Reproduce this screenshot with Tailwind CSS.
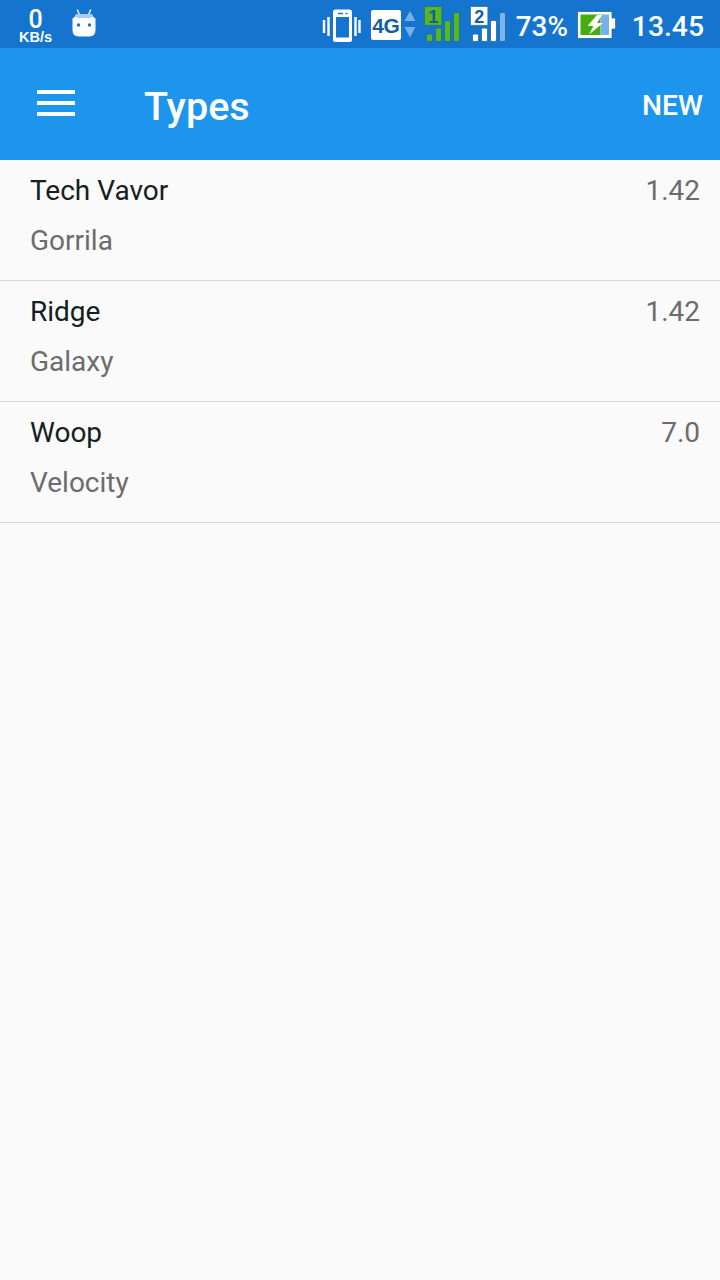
<!DOCTYPE html>
<html lang="en">
<head>
    <meta charset="UTF-8">
    <meta name="viewport" content="width=device-width, initial-scale=1.0">
    <title>Types</title>
    <script src="https://cdn.jsdelivr.net/npm/@tailwindcss/browser@4"></script>
</head>
<body class="bg-[#fafafa] min-h-screen font-['Roboto',sans-serif]">
    <!-- Status bar -->
    <div class="flex h-12 bg-[#1575ce] text-white overflow-hidden">
        <div class="w-[34px] ml-[18.5px] pt-[9px] flex flex-col items-center">
            <span class="text-[25px] leading-[21px] font-medium">0</span>
            <span class="text-[14.5px] leading-[14px] font-bold font-['Liberation_Sans',sans-serif]">KB/s</span>
        </div>
        <svg class="ml-[19.5px] mt-[8px] w-6 h-[30px]" viewBox="0 0 24 30" fill="none">
            <path d="M5.500 2l2 5M18.500 2l-2 5" stroke="#e8f4ff" stroke-width="1.500" stroke-linecap="round" />
            <path d="M4 6h16l2.500 4.500h-21z" fill="#a9cdf0" />
            <path d="M.5 10.500L3 9h18l2.500 1.500V22q0 6-6 6.500h-11q-6-.5-6-6.500z" fill="#fff" />
            <path d="M5 6h14v4H5z" fill="#a9cdf0" />
            <circle cx="6.500" cy="17" r="1.700" fill="#1575ce" />
            <circle cx="17.500" cy="17" r="1.700" fill="#1575ce" />
        </svg>

        <div class="ml-auto flex">
            <!-- Vibrate -->
            <svg class="w-[40px] h-12" viewBox="0 0 40 48">
                <path d="M3 20v13M7.500 17v19M34.500 17v19M38.500 20v13" stroke="#fff" stroke-width="2.400" />
                <rect x="12" y="9.500" width="19" height="32.500" rx="2.500" fill="#fff" />
                <rect x="15" y="17" width="13" height="20.500" fill="#1575ce" />
                <path d="M17 13.500h5M24.500 13.500h2" stroke="#1575ce" stroke-width="1.500" />
            </svg>
            <!-- Network type -->
            <div class="ml-[10px] mt-[10px] w-[30px] h-[30px] rounded-[2px] bg-white text-[#175f9c] flex items-center justify-center text-[21px] leading-none font-bold font-['Liberation_Sans',sans-serif] tracking-[-0.5px]">4G</div>
            <svg class="ml-[3px] w-3 h-12" viewBox="0 0 12 48" fill="#74b0ea">
                <path d="M6 11l5.500 10H.5z" />
                <path d="M6 37.500L.5 27h11z" />
            </svg>
            <!-- Signals -->
            <svg class="ml-[8px] w-[37px] h-12" viewBox="0 0 37 48">
                <g fill="#56b81c" stroke="#1a6aa0" stroke-width=".8">
                    <rect x=".4" y="6.400" width="17.500" height="19" rx="1" />
                    <rect x="2.500" y="34" width="6" height="7.500" rx="1.500" />
                    <rect x="11.500" y="28" width="6" height="13.500" rx="1.500" />
                    <rect x="20.500" y="20.500" width="6" height="21" rx="1.500" />
                    <rect x="29.500" y="12.500" width="6" height="29" rx="1.500" />
                </g>
                <text x="9.300" y="22.500" text-anchor="middle" font-family="Liberation Sans, sans-serif" font-size="18" font-weight="bold" fill="#175f9c">1</text>
            </svg>
            <svg class="ml-[9px] w-[37px] h-12" viewBox="0 0 37 48">
                <g fill="#fff" stroke="#1a6aa0" stroke-width=".8">
                    <rect x=".4" y="6.400" width="17.500" height="19" rx="1" />
                    <rect x="2.500" y="34" width="6" height="7.500" rx="1.500" />
                    <rect x="11.500" y="28" width="6" height="13.500" rx="1.500" />
                    <rect x="20.500" y="20.500" width="6" height="21" rx="1.500" />
                    <rect x="29.500" y="12.500" width="6" height="29" rx="1.500" fill="#78b4ee" />
                </g>
                <text x="9.300" y="22.500" text-anchor="middle" font-family="Liberation Sans, sans-serif" font-size="18" font-weight="bold" fill="#175f9c">2</text>
            </svg>
            <!-- Battery -->
            <span class="ml-[9px] w-[52px] text-[27.8px] leading-[54px] font-medium whitespace-nowrap">73%</span>
            <svg class="ml-[8px] w-[40px] h-12" viewBox="0 0 40 48">
                <path d="M1.500 11.500h34.500v6.500h3.600v11h-3.600v9.500h-34.500z" fill="#fff" stroke="#1a6aa0" stroke-width=".8" />
                <rect x="4.500" y="14.500" width="20" height="20.500" fill="#46ac10" />
                <rect x="24.500" y="14.500" width="8.500" height="20.500" fill="#78b0e4" />
                <path d="M21 15L11.500 26h6L13 34.500 27 23h-6l5-8z" fill="#fff" />
            </svg>
            <span class="ml-[16px] mr-[16px] text-[28.3px] leading-[54px] font-medium whitespace-nowrap">13.45</span>
        </div>
    </div>

    <!-- Toolbar -->
    <header class="flex items-center h-28 pl-[37px] pr-[17px] bg-[#1e95ed] text-white">
        <svg class="w-[38px] h-[28px] -mt-[2px]" viewBox="0 0 38 28" fill="#fff">
            <path d="M0 1h38v4H0zM0 12h38v4H0zM0 23h38v4H0z" />
        </svg>
        <h1 class="ml-[69px] mt-[5px] text-[39.5px] leading-none font-medium">Types</h1>
        <button class="ml-auto mt-[4px] text-[28.3px] leading-none font-medium">NEW</button>
    </header>

    <!-- Types list -->
    <ul class="text-[28px] leading-10 text-[#6c6c6c]">
        <li class="flex justify-between h-[121px] pt-[11px] pl-[30px] pr-5 border-b border-[#d6d6d6]">
            <div>
                <p class="mb-[10px] text-[#14201f]">Tech Vavor</p>
                <p>Gorrila</p>
            </div>
            <span>1.42</span>
        </li>
        <li class="flex justify-between h-[121px] pt-[11px] pl-[30px] pr-5 border-b border-[#d6d6d6]">
            <div>
                <p class="mb-[10px] text-[#14201f]">Ridge</p>
                <p>Galaxy</p>
            </div>
            <span>1.42</span>
        </li>
        <li class="flex justify-between h-[121px] pt-[11px] pl-[30px] pr-5 border-b border-[#d6d6d6]">
            <div>
                <p class="mb-[10px] text-[#14201f]">Woop</p>
                <p>Velocity</p>
            </div>
            <span>7.0</span>
        </li>
    </ul>
</body>
</html>
